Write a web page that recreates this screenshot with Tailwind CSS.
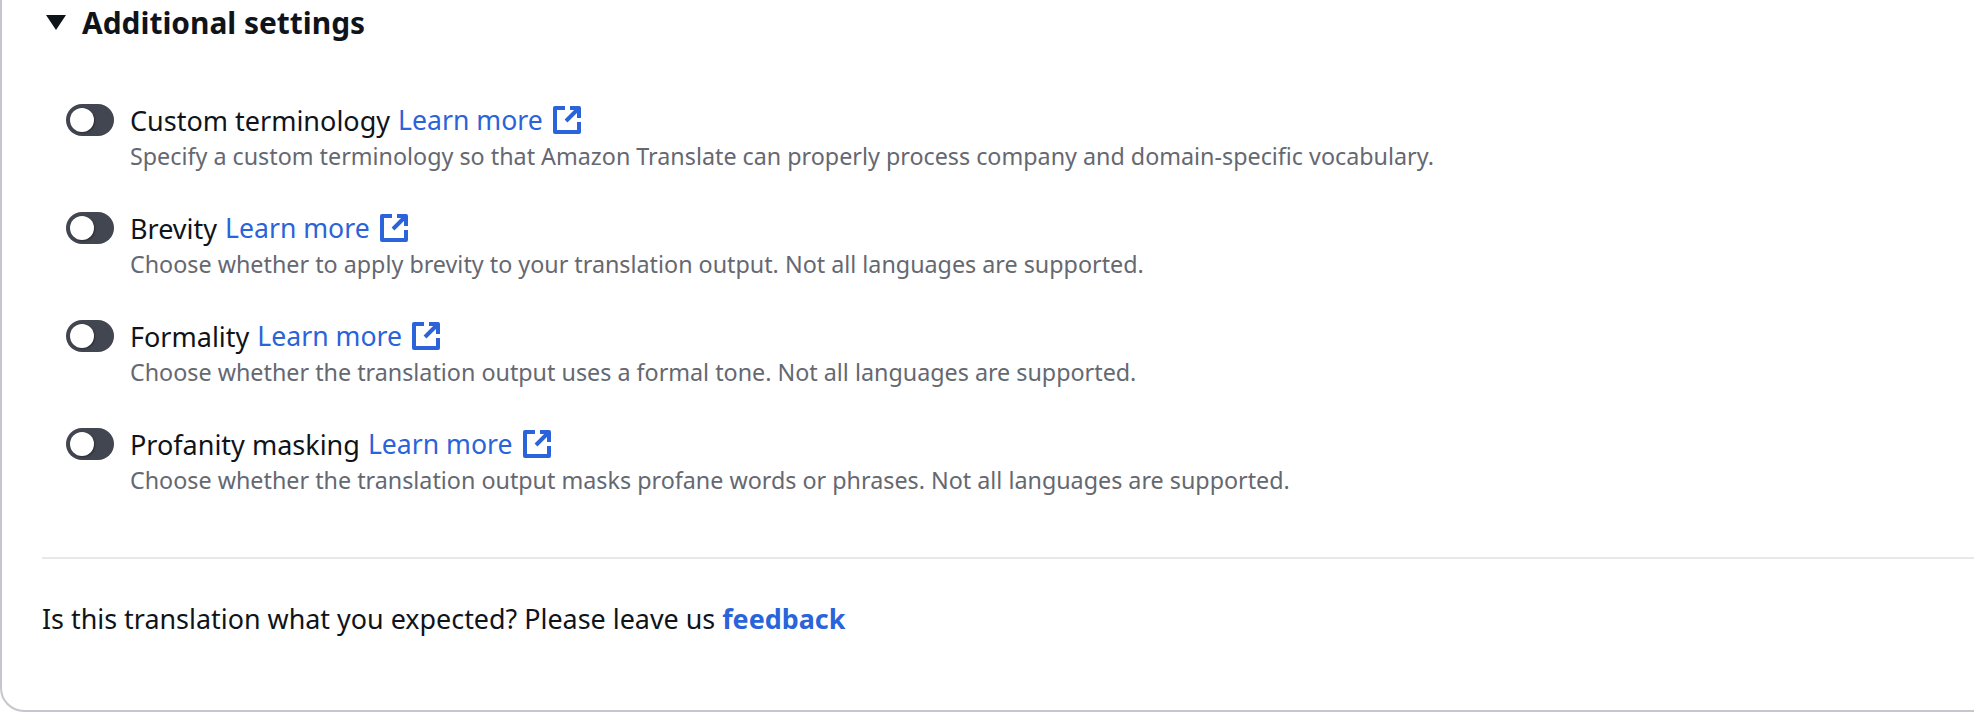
<!DOCTYPE html>
<html lang="en">

<head>
    <meta charset="UTF-8">
    <title>Additional settings</title>
    <script src="https://cdn.jsdelivr.net/npm/@tailwindcss/browser@4"></script>
</head>

<body class="bg-white overflow-hidden font-['Noto_Sans',sans-serif]">
    <div class="h-[712px] w-full border-l-2 border-b-2 border-[#c6c6cd] rounded-bl-[24px] pl-[40px]">
        <!-- Header -->
        <div class="flex items-center h-[46px] pl-[4px] gap-[16px]">
            <svg width="20" height="15" viewBox="0 0 20 15" class="shrink-0 -mt-[1px]">
                <polygon points="0,0 20,0 10,15" fill="#0f141a"></polygon>
            </svg>
            <h2 class="text-[29.9px] leading-[46px] font-bold text-[#0f141a]">Additional settings</h2>
        </div>

        <!-- Toggles -->
        <div class="pl-[24px] pt-[58px] flex flex-col gap-[38px]">
            <div class="flex gap-[16px]">
                <div class="w-[48px] h-[32px] rounded-full bg-[#424650] relative shrink-0">
                    <div class="absolute left-[4px] top-[4px] w-[24px] h-[24px] rounded-full bg-white shadow-[1px_1px_2px_#2a2d33]"></div>
                </div>
                <div>
                    <div class="flex items-center h-[34px] text-[27px] text-[#0f141a] gap-[8px]">
                        <span>Custom terminology</span>
                        <span class="text-[26.6px] text-[#2a63da]">Learn more</span>
                        <svg width="28" height="28" viewBox="0 0 28 28" fill="none" stroke="#2a63da" stroke-width="4" stroke-linejoin="round" class="ml-[2px] -mt-[2px]">
                            <path d="M12 2H2V26H26V16"></path>
                            <path d="M17 2H26V12M26 2L13 15"></path>
                        </svg>
                    </div>
                    <p class="text-[23.3px] leading-[36px] text-[#656871]">Specify a custom terminology so that Amazon Translate can properly process company and domain-specific vocabulary.</p>
                </div>
            </div>

            <div class="flex gap-[16px]">
                <div class="w-[48px] h-[32px] rounded-full bg-[#424650] relative shrink-0">
                    <div class="absolute left-[4px] top-[4px] w-[24px] h-[24px] rounded-full bg-white shadow-[1px_1px_2px_#2a2d33]"></div>
                </div>
                <div>
                    <div class="flex items-center h-[34px] text-[27px] text-[#0f141a] gap-[8px]">
                        <span>Brevity</span>
                        <span class="text-[26.6px] text-[#2a63da]">Learn more</span>
                        <svg width="28" height="28" viewBox="0 0 28 28" fill="none" stroke="#2a63da" stroke-width="4" stroke-linejoin="round" class="ml-[2px] -mt-[2px]">
                            <path d="M12 2H2V26H26V16"></path>
                            <path d="M17 2H26V12M26 2L13 15"></path>
                        </svg>
                    </div>
                    <p class="text-[23.3px] leading-[36px] text-[#656871]">Choose whether to apply brevity to your translation output. Not all languages are supported.</p>
                </div>
            </div>

            <div class="flex gap-[16px]">
                <div class="w-[48px] h-[32px] rounded-full bg-[#424650] relative shrink-0">
                    <div class="absolute left-[4px] top-[4px] w-[24px] h-[24px] rounded-full bg-white shadow-[1px_1px_2px_#2a2d33]"></div>
                </div>
                <div>
                    <div class="flex items-center h-[34px] text-[27px] text-[#0f141a] gap-[8px]">
                        <span>Formality</span>
                        <span class="text-[26.6px] text-[#2a63da]">Learn more</span>
                        <svg width="28" height="28" viewBox="0 0 28 28" fill="none" stroke="#2a63da" stroke-width="4" stroke-linejoin="round" class="ml-[2px] -mt-[2px]">
                            <path d="M12 2H2V26H26V16"></path>
                            <path d="M17 2H26V12M26 2L13 15"></path>
                        </svg>
                    </div>
                    <p class="text-[23.3px] leading-[36px] text-[#656871]">Choose whether the translation output uses a formal tone. Not all languages are supported.</p>
                </div>
            </div>

            <div class="flex gap-[16px]">
                <div class="w-[48px] h-[32px] rounded-full bg-[#424650] relative shrink-0">
                    <div class="absolute left-[4px] top-[4px] w-[24px] h-[24px] rounded-full bg-white shadow-[1px_1px_2px_#2a2d33]"></div>
                </div>
                <div>
                    <div class="flex items-center h-[34px] text-[27px] text-[#0f141a] gap-[8px]">
                        <span>Profanity masking</span>
                        <span class="text-[26.6px] text-[#2a63da]">Learn more</span>
                        <svg width="28" height="28" viewBox="0 0 28 28" fill="none" stroke="#2a63da" stroke-width="4" stroke-linejoin="round" class="ml-[2px] -mt-[2px]">
                            <path d="M12 2H2V26H26V16"></path>
                            <path d="M17 2H26V12M26 2L13 15"></path>
                        </svg>
                    </div>
                    <p class="text-[23.3px] leading-[36px] text-[#656871]">Choose whether the translation output masks profane words or phrases. Not all languages are supported.</p>
                </div>
            </div>
        </div>

        <!-- Footer -->
        <div class="mt-[59px] border-t-2 border-[#e8e8ea] pt-[42px]">
            <p class="text-[26.9px] leading-[36px] text-[#0f141a]">Is this translation what you expected? Please leave us <a class="font-bold text-[#2a63da]">feedback</a></p>
        </div>
    </div>
</body>

</html>
